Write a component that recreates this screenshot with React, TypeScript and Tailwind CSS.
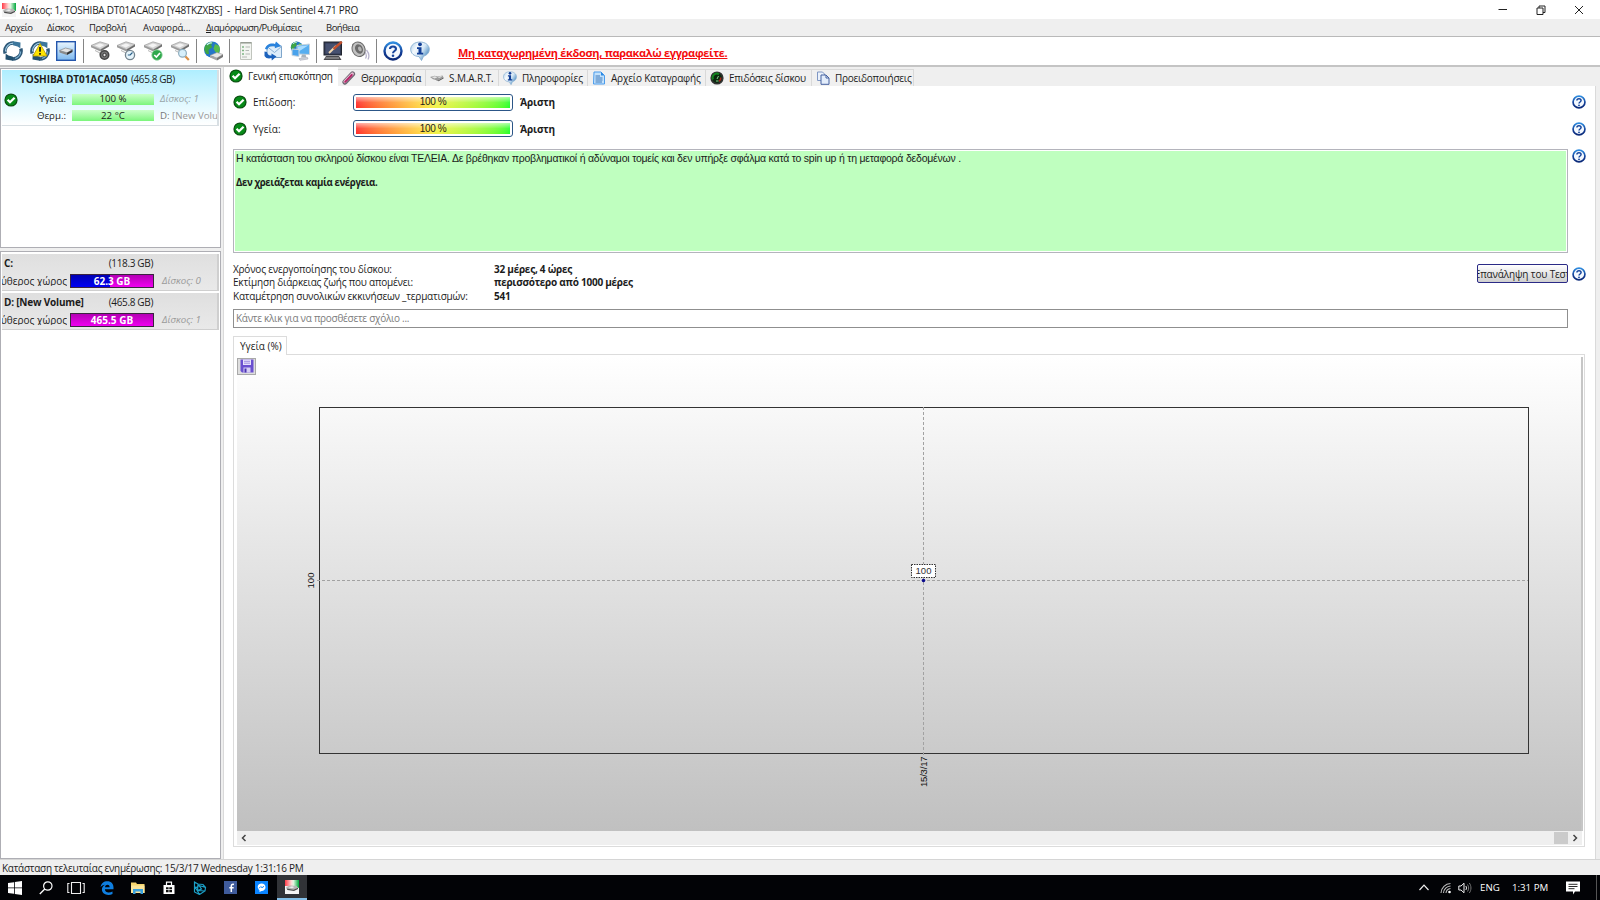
import React from 'react';

interface IconProps {
  size?: number;
}

interface TabItem {
  label: string;
  icon: React.ReactNode;
  width: string;
  tracking: string;
}

const CheckIcon: React.FC<IconProps> = ({ size = 14 }) => (
  <svg width={size} height={size} viewBox="0 0 14 14" className="shrink-0">
    <circle cx="7" cy="7" r="6.6" fill="#0c4a12" />
    <circle cx="7" cy="7" r="5.5" fill="#078a18" />
    <path d="M3.6 6.8 6 9.2 10.600 4.700" fill="none" stroke="#fff" strokeWidth="2.300" />
  </svg>
);

const HelpIcon: React.FC<IconProps> = ({ size = 14 }) => (
  <svg width={size} height={size} viewBox="0 0 20 20" className="shrink-0">
    <defs>
      <linearGradient id="helpRing" x1="0" y1="0" x2="0" y2="1">
        <stop offset="0" stopColor="#2f8de0" />
        <stop offset="0.6" stopColor="#123c94" />
        <stop offset="1" stopColor="#0c2a78" />
      </linearGradient>
    </defs>
    <circle cx="10" cy="10" r="8.500" fill="#f4f9ff" stroke="url(#helpRing)" strokeWidth="2.400" />
    <path d="M7 8C7 4.600 13 4.600 13 8 13 10 10 10 10 12.200" fill="none" stroke="#17459c" strokeWidth="2.100" />
    <circle cx="10" cy="14.700" r="1.300" fill="#17459c" />
  </svg>
);

const InfoIcon: React.FC<IconProps> = ({ size = 20 }) => (
  <svg width={size} height={size} viewBox="0 0 20 20" className="shrink-0">
    <defs>
      <linearGradient id="infoBubble" x1="0" y1="0" x2="1" y2="0.6">
        <stop offset="0" stopColor="#a8cdea" />
        <stop offset="0.35" stopColor="#f4f9fd" />
        <stop offset="0.65" stopColor="#d5e7f5" />
        <stop offset="1" stopColor="#4f8fc4" />
      </linearGradient>
    </defs>
    <path d="M10 1C15.500 1 19.300 4.200 19.300 8.300 19.300 12 16.500 14.500 13.500 15.300L11.500 19.500 9 15.600C4 15.300 .7 12.300 .7 8.300 .7 4.200 4.500 1 10 1Z" fill="url(#infoBubble)" stroke="#86aed0" strokeWidth="0.900" />
    <circle cx="10" cy="3.300" r="1.900" fill="#123f96" />
    <path d="M7 6.200H11.500V11.800H13.200V13.500H7V11.800H8.500V7.900H7Z" fill="#123f96" />
  </svg>
);

const AppIcon: React.FC<IconProps> = ({ size = 14 }) => (
  <svg width={size} height={size} viewBox="0 0 14 14" className="shrink-0">
    <defs>
      <linearGradient id="appBg" x1="0" y1="0" x2="1" y2="0">
        <stop offset="0" stopColor="#ff3b48" />
        <stop offset="0.45" stopColor="#ffd9d6" />
        <stop offset="0.6" stopColor="#e2f6e2" />
        <stop offset="1" stopColor="#00a83c" />
      </linearGradient>
    </defs>
    <rect width="14" height="14" fill="#f4f4f4" />
    <path d="M0 0H14V8L7 6 0 6Z" fill="url(#appBg)" />
    <path d="M1 7 5 5.500 11.500 6 13 7.800 9 10 2 9Z" fill="#b5b5b5" />
    <path d="M1.500 8.500 8.500 9.700 13 7.800V9L9 11 2.500 10Z" fill="#4b4b4b" />
    <path d="M3.500 7.200 7 6.300 9.500 7.100 7 8.300Z" fill="#ececec" />
  </svg>
);

const RefreshIcon: React.FC<{ warn?: boolean }> = ({ warn }) => (
  <svg width="20" height="20" viewBox="0 0 20 20">
    <path d="M10.500 2A8.200 8.200 0 0 0 2.200 12.500" fill="none" stroke="#2d5878" strokeWidth="3.400" />
    <path d="M9.500 18A8.200 8.200 0 0 0 17.800 7.500" fill="none" stroke="#2d5878" strokeWidth="3.400" />
    <path d="M10.500 2.200A7.800 7.800 0 0 0 2.500 10.500" fill="none" stroke="#9fcbe4" strokeWidth="1.200" />
    <path d="M12 17.500A7.800 7.800 0 0 0 17.600 10.500" fill="none" stroke="#7db1d2" strokeWidth="1.200" />
    <path d="M10 .3 17.500 1.500 17.300 7.300 14.500 5.400 10 4.200Z" fill="#3d779c" />
    <path d="M10 19.700 2.500 18.500 2.700 12.700 5.500 14.600 10 15.800Z" fill="#22506f" />
    {warn && (
      <g>
        <path d="M10 2.500 17 15H3Z" fill="#ffe500" stroke="#b79b00" strokeWidth="0.800" strokeLinejoin="round" />
        <path d="M10 6V10.800M10 12V13.700" stroke="#111" strokeWidth="1.700" />
      </g>
    )}
  </svg>
);

const DriveBody = () => (
  <g>
    <path d="M1 4.500 10 .8 19 3.500 10.500 8.600Z" fill="#d3d3d3" stroke="#9c9c9c" strokeWidth="0.700" />
    <path d="M1 4.500V6.300L10.500 10.500V8.600Z" fill="#9a9a9a" />
    <path d="M10.500 8.600 19 3.500V5.500L10.500 10.500Z" fill="#6c6c6c" />
    <path d="M5 4.600 10 2.500 14.500 4 9.800 6.500Z" fill="#f4f4f4" />
    <path d="M5 9.500 11 12.500 9 13" fill="none" stroke="#b5b5b5" strokeWidth="1" />
  </g>
);

const DriveIcon: React.FC<{ badge: 'gear' | 'clock' | 'check' | 'search' }> = ({ badge }) => (
  <svg width="20" height="20" viewBox="0 0 20 20">
    <DriveBody />
    {badge === 'gear' && (
      <g>
        <circle cx="14.500" cy="14" r="4.200" fill="#777" stroke="#444" strokeWidth="1.600" />
        <circle cx="14.500" cy="14" r="1.700" fill="#e4e4e4" stroke="#333" />
      </g>
    )}
    {badge === 'clock' && (
      <g>
        <circle cx="14" cy="14" r="4.600" fill="#e6f4fb" stroke="#73838e" strokeWidth="1.300" />
        <path d="M14 14 16.500 11.500M14 14H11.800" stroke="#2a5f88" strokeWidth="1.100" />
      </g>
    )}
    {badge === 'check' && (
      <g>
        <circle cx="14" cy="14" r="5.200" fill="#2fa84c" stroke="#8fd29d" strokeWidth="0.800" />
        <path d="M11.300 14 13.400 16.100 17 12" fill="none" stroke="#fff" strokeWidth="1.700" />
      </g>
    )}
    {badge === 'search' && (
      <g>
        <path d="M15 15 18.800 19" stroke="#dc9147" strokeWidth="2.200" />
        <circle cx="12.500" cy="12.300" r="3.900" fill="#d8f0fb" stroke="#8faebf" strokeWidth="1.200" />
      </g>
    )}
  </svg>
);

const DriveBoxIcon = () => (
  <svg width="20" height="20" viewBox="0 0 20 20">
    <defs>
      <linearGradient id="driveBox" x1="0" y1="0" x2="0" y2="1">
        <stop offset="0" stopColor="#e9f6ff" />
        <stop offset="1" stopColor="#7db8ee" />
      </linearGradient>
    </defs>
    <rect x="0.700" y="0.700" width="18.600" height="18.600" fill="url(#driveBox)" stroke="#2456ac" strokeWidth="1.400" />
    <path d="M3.500 9.500 9.500 7 16.500 8.700 11 11.800Z" fill="#e4e4e4" stroke="#777" strokeWidth="0.600" />
    <path d="M3.500 9.500V11.500L11 14V11.800Z" fill="#8a8a8a" />
    <path d="M11 11.800 16.500 8.700V11L11 14Z" fill="#333" />
  </svg>
);

const Globe = () => (
  <g>
    <circle cx="9" cy="8.500" r="8" fill="#2477c9" />
    <path d="M2 5C4 1 8 .3 10 1.500L8 4 9.500 6 5.500 9 6 13 3.500 13C1 10 .8 7.500 2 5Z" fill="#3ea545" />
    <path d="M12 3 16 4.800C17.500 7.500 17 11 15 13L12 10.500 10.500 7.500Z" fill="#57bb4c" />
    <path d="M4 4C5.500 2 7.500 1.500 9 2" fill="none" stroke="#c8ecff" strokeWidth="1.200" />
  </g>
);

const GlobeDriveIcon = () => (
  <svg width="20" height="20" viewBox="0 0 20 20">
    <Globe />
    <path d="M7 14.500 14 11.500 20 13.500 14 17Z" fill="#e7e7e7" stroke="#999" strokeWidth="0.600" />
    <path d="M7 14.500V16.500L14 19.500V17Z" fill="#a5a5a5" />
    <path d="M14 17 20 13.500V16L14 19.500Z" fill="#777" />
  </svg>
);

const ReportIcon = () => (
  <svg width="20" height="20" viewBox="0 0 20 20">
    <path d="M4.500 1.500H15.500V18.500H4.500Z" fill="#f3f5f1" stroke="#c0c4bd" />
    <path d="M4.500 1.200H15.500V2.500H4.500Z" fill="#8d9489" />
    <path d="M6 6H8M6 9.500H8M6 13H8" stroke="#7fb584" strokeWidth="1.500" />
    <path d="M9.500 6H14M9.500 9.500H13M9.500 13H14M6 16H11" stroke="#b4b9b4" strokeWidth="1" />
  </svg>
);

const MailSyncIcon = () => (
  <svg width="20" height="20" viewBox="0 0 20 20">
    <path d="M4 5H18.500V16.500H4Z" fill="#dfeefb" stroke="#7fa6cb" />
    <path d="M4 5.500 11.500 11.500 18.500 5.500" fill="none" stroke="#8cb2d6" />
    <path d="M2 8C3 3.500 8 1.500 12 3L13 .5 18 5 11.800 7.300 12 5.500C8 4.300 5 6 4.500 8.500Z" fill="#2a83dd" />
    <path d="M1.500 10.500V15C3 17.500 6 18 8.500 17L8.800 19.500 13.500 15.500 8.500 12.500V14.500C6 15 4.500 13.500 4 11Z" fill="#1c62bd" />
  </svg>
);

const GlobeMonitorsIcon = () => (
  <svg width="20" height="20" viewBox="0 0 20 20">
    <g transform="scale(0.750)">
      <Globe />
    </g>
    <path d="M7 4.500 19.500 3V13.500L7 13Z" fill="#57aef0" stroke="#c8d3dd" />
    <path d="M8 5.500 18.500 4.200 8 11Z" fill="#a8dcff" />
    <path d="M2 8 9 8.500V15.500L2 14.500Z" fill="#49a2ec" stroke="#ccd6df" />
    <path d="M12 13.500H15.500L16.500 16.500H11Z" fill="#a9b3bc" />
    <path d="M9 17.500 17.500 16.500 18 18 10 19.300Z" fill="#d3d9de" stroke="#99a" strokeWidth="0.500" />
  </svg>
);

const MonitorPenIcon = () => (
  <svg width="20" height="20" viewBox="0 0 20 20">
    <rect x="1" y="1" width="17.500" height="13" fill="#333b52" stroke="#20242e" />
    <path d="M2.500 2.500H17V12.500H2.500Z" fill="#465170" />
    <path d="M3 15H16L18.500 19H0.500Z" fill="#4a4a4e" />
    <path d="M2.500 17H16" stroke="#bbb" strokeWidth="0.900" />
    <path d="M6 12 13 5" stroke="#f3d9b0" strokeWidth="2" />
    <path d="M10.500 8 18.800 .8" stroke="#c4502d" strokeWidth="2.400" />
  </svg>
);

const SpeakerIcon = () => (
  <svg width="20" height="20" viewBox="0 0 20 20">
    <path d="M14 10C16 12 17 15 15.500 17.500M16.500 9C19 12 19.500 15.500 18 18.500" fill="none" stroke="#b7b3cc" strokeWidth="1.300" />
    <path d="M2 3 9 .8 15.500 8 14.500 14 9 15.500 2 9Z" fill="#9a9a9a" />
    <ellipse cx="8.500" cy="8" rx="6.300" ry="7.500" transform="rotate(-25 9 8)" fill="#c0c0c0" stroke="#6a6a6a" />
    <ellipse cx="9" cy="8" rx="3.800" ry="5" transform="rotate(-25 9 8)" fill="#6b6b6b" />
    <ellipse cx="9.800" cy="8.300" rx="1.700" ry="2.500" transform="rotate(-25 9 8)" fill="#b4b4b4" />
  </svg>
);

const ThermometerIcon = () => (
  <svg width="14" height="14" viewBox="0 0 14 14" className="shrink-0">
    <path d="M3 11 10.500 3" stroke="#6d6672" strokeWidth="5.200" strokeLinecap="round" />
    <path d="M3 10.500 10.300 3" stroke="#e6bcd0" strokeWidth="3.200" strokeLinecap="round" />
    <path d="M3.200 10.800 9.800 4" stroke="#b32468" strokeWidth="1.900" strokeLinecap="round" />
  </svg>
);

const SmallDriveIcon = () => (
  <svg width="14" height="14" viewBox="0 0 14 14" className="shrink-0">
    <path d="M0 6 4.500 4.700 8 5.500 12.500 4.500 13.500 6.500 8 9.500 3 8.300Z" fill="#9c9c9c" />
    <path d="M1.500 6 5 5.200 7.500 6.200 4.500 7.400Z" fill="#e4e4e4" />
    <path d="M5 8.500 8 9.500 13.500 6.500V7.500L8.500 10.300Z" fill="#555" />
    <path d="M8.500 6.500 11.500 5.500" stroke="#eee" />
  </svg>
);

const LogIcon = () => (
  <svg width="14" height="14" viewBox="0 0 14 14" className="shrink-0">
    <path d="M2 1H9L12.500 4.500V13H1.500Z" fill="#c3e2fc" stroke="#4a9cec" />
    <path d="M9 1V4.500H12.500Z" fill="#2c8ae4" />
    <path d="M3.500 5H8M3.500 7H10.500M3.500 9H10.500M3.500 11H10" stroke="#3a76b8" strokeWidth="1" />
  </svg>
);

const GaugeIcon = () => (
  <svg width="14" height="14" viewBox="0 0 14 14" className="shrink-0">
    <circle cx="7" cy="7" r="6.600" fill="#333" />
    <circle cx="7" cy="7" r="4.900" fill="#0b2a0f" />
    <path d="M3 8.500A4.200 4.200 0 0 1 9 3.200" fill="none" stroke="#12871f" strokeWidth="1.900" />
    <path d="M10.800 6.500A4.200 4.200 0 0 1 9 10.300" fill="none" stroke="#a8231a" strokeWidth="1.500" />
    <path d="M7 8 8.500 5M6 10H8.500" stroke="#8ad08f" strokeWidth="1" />
  </svg>
);

const CopyIcon = () => (
  <svg width="14" height="14" viewBox="0 0 14 14" className="shrink-0">
    <path d="M1.500 1H6.500L8.500 3V9.500H1.500Z" fill="#eaf1fb" stroke="#7f97c4" />
    <path d="M5 4H10L13 7V13.300H5Z" fill="#e3edfb" stroke="#45619f" />
    <path d="M10 4V7H13" fill="none" stroke="#45619f" />
  </svg>
);

const Cell: React.FC<{ children: React.ReactNode }> = ({ children }) => (
  <div className="flex w-[26.6px] shrink-0 justify-center">{children}</div>
);

const Separator = () => (
  <div className="flex h-6 w-[6.8px] shrink-0 justify-center">
    <div className="w-px bg-[#858585]" />
  </div>
);

const menu = [
  { label: 'Αρχείο', width: 'w-[42px]' },
  { label: 'Δίσκος', width: 'w-[42px]' },
  { label: 'Προβολή', width: 'w-[54px]' },
  { label: 'Αναφορά...', width: 'w-[63px]' },
  { label: 'Διαμόρφωση/Ρυθμίσεις', width: 'w-[120px]' },
  { label: 'Βοήθεια', width: 'w-[60px]' },
];

const tabs: TabItem[] = [
  { label: 'Θερμοκρασία', icon: <ThermometerIcon />, width: 'w-[88px]', tracking: 'tracking-[-0.35px]' },
  { label: 'S.M.A.R.T.', icon: <SmallDriveIcon />, width: 'w-[73px]', tracking: 'tracking-[-0.1px]' },
  { label: 'Πληροφορίες', icon: <InfoIcon size={14} />, width: 'w-[89px]', tracking: 'tracking-[-0.2px]' },
  { label: 'Αρχείο Καταγραφής', icon: <LogIcon />, width: 'w-[118px]', tracking: 'tracking-[-0.2px]' },
  { label: 'Επιδόσεις δίσκου', icon: <GaugeIcon />, width: 'w-[106px]', tracking: 'tracking-[-0.33px]' },
  { label: 'Προειδοποιήσεις', icon: <CopyIcon />, width: 'w-[102px]', tracking: 'tracking-[-0.28px]' },
];

const TitleBar = () => (
  <div className="flex h-[19px] items-center bg-white pl-[2px]">
    <AppIcon />
    <span className="mt-px ml-1 text-[10px] tracking-[-0.27px]">Δίσκος: 1, TOSHIBA DT01ACA050 [Y48TKZXBS]&nbsp; -&nbsp; Hard Disk Sentinel 4.71 PRO</span>
    <div className="ml-auto flex items-center gap-[28px] pr-4">
      <svg width="10" height="10" viewBox="0 0 10 10"><path d="M0.500 4.500H9" stroke="#222" /></svg>
      <svg width="10" height="10" viewBox="0 0 10 10"><path d="M1 3H7V9.500H1ZM3 3V1H9V7.500H7" fill="none" stroke="#222" /></svg>
      <svg width="10" height="10" viewBox="0 0 10 10"><path d="M1 1 9 9M9 1 1 9" stroke="#222" /></svg>
    </div>
  </div>
);

const MenuBar = () => (
  <div className="flex h-[18px] items-center border-b border-[#b9b9b9] bg-[#efefef] pl-[5px] text-[9.5px] tracking-[-0.5px]">
    {menu.map((item) => (
      <span key={item.label} className={`shrink-0 ${item.width} ${item.label.endsWith('...') ? 'tracking-[-0.1px]' : ''}`}>
        {item.label.startsWith('Διαμ') ? (
          <><u>Δ</u>{item.label.slice(1)}</>
        ) : item.label}
      </span>
    ))}
  </div>
);

const Toolbar = () => (
  <div className="flex h-[30px] items-center border-b-2 border-[#c4c4c4] bg-white">
    <Cell><RefreshIcon /></Cell>
    <Cell><RefreshIcon warn /></Cell>
    <Cell><DriveBoxIcon /></Cell>
    <Separator />
    <Cell><DriveIcon badge="gear" /></Cell>
    <Cell><DriveIcon badge="clock" /></Cell>
    <Cell><DriveIcon badge="check" /></Cell>
    <Cell><DriveIcon badge="search" /></Cell>
    <Separator />
    <Cell><GlobeDriveIcon /></Cell>
    <Separator />
    <Cell><ReportIcon /></Cell>
    <Cell><MailSyncIcon /></Cell>
    <Cell><GlobeMonitorsIcon /></Cell>
    <Separator />
    <Cell><MonitorPenIcon /></Cell>
    <Cell><SpeakerIcon /></Cell>
    <Separator />
    <Cell><HelpIcon size={20} /></Cell>
    <Cell><InfoIcon /></Cell>
    <span className="mt-[3px] ml-[25px] text-[11px] font-bold tracking-[-0.32px] text-[#f40d0d] underline">
      Μη καταχωρημένη έκδοση, παρακαλώ εγγραφείτε.
    </span>
  </div>
);

const StatusBarCell: React.FC<{ value: string }> = ({ value }) => (
  <div className="flex h-[11px] w-[82px] items-center justify-center bg-linear-to-b from-[#c9ffc9] to-[#7bf57b] text-[9.7px]">
    {value}
  </div>
);

const DiskPanel = () => (
  <div className="h-[180px] border border-[#aeaeb4] bg-white p-px">
    <div className="h-[56px] overflow-hidden border-r-2 border-b border-[#d8dfe3] bg-linear-to-b from-[#aeeeff] to-white pt-px">
      <div className="flex h-4 items-center pl-[18px] text-[10px]">
        <b className="w-[111px] shrink-0 tracking-[-0.06px]">TOSHIBA DT01ACA050</b>
        <span className="tracking-[-0.4px]">(465.8 GB)</span>
      </div>
      <div className="flex items-start pt-[4px]">
        <div className="w-[20px] shrink-0 pt-[2px] pl-[2px]"><CheckIcon /></div>
        <div className="flex flex-col">
          <div className="flex h-[16px] items-center text-[9.7px] whitespace-nowrap">
            <span className="mr-[6px] w-[44px] text-right">Υγεία:</span>
            <StatusBarCell value="100 %" />
            <i className="ml-[6px] text-[#9aa4a8]">Δίσκος: 1</i>
          </div>
          <div className="flex h-[17px] items-center text-[9.7px] whitespace-nowrap">
            <span className="mr-[6px] w-[44px] text-right">Θερμ.:</span>
            <StatusBarCell value="22 °C" />
            <span className="ml-[6px] text-[#9a9a9a]"><span className="text-[#777]">D:</span> [New Volume]</span>
          </div>
        </div>
      </div>
    </div>
  </div>
);

interface VolumeProps {
  name: string;
  total: string;
  free: string;
  disk: string;
  usedPct: number;
}

const Volume: React.FC<VolumeProps> = ({ name, total, free, disk, usedPct }) => (
  <div className="mb-[2px] h-[37px] overflow-hidden border-r-2 border-b border-[#cfcfcf] bg-linear-to-b from-[#dfdfdf] to-[#e9e9e9] text-[10px]">
    <div className="flex h-[17px] items-center justify-between pr-[64px] pl-[2px]">
      <b className="tracking-[-0.2px]">{name}</b>
      <span className="tracking-[-0.35px]">{total}</span>
    </div>
    <div className="flex h-[19px] items-center whitespace-nowrap">
      <div className="mr-[3px] flex w-[65px] shrink-0 justify-end overflow-hidden">Ελεύθερος χώρος</div>
      <div className="relative h-[14px] w-[84px] shrink-0 border border-[#3b2340] bg-linear-to-b from-[#b400b4] to-[#f000f0]">
        <div className="h-full bg-linear-to-b from-[#0000b4] to-[#0000f4]" style={{ width: `${usedPct}%` }} />
        <b className="absolute inset-0 flex items-center justify-center text-white">{free}</b>
      </div>
      <i className="ml-2 text-[9.7px] text-[#999]">{disk}</i>
    </div>
  </div>
);

const Sidebar = () => (
  <div className="flex w-[221px] shrink-0 flex-col gap-[3px] pt-px">
    <DiskPanel />
    <div className="flex-1 border border-[#aeaeb4] bg-white pt-[2px] pr-px pl-px">
      <Volume name="C:" total="(118.3 GB)" free="62.3 GB" disk="Δίσκος: 0" usedPct={47} />
      <Volume name="D: [New Volume]" total="(465.8 GB)" free="465.5 GB" disk="Δίσκος: 1" usedPct={0} />
    </div>
  </div>
);

const Meter: React.FC<{ label: string }> = ({ label }) => (
  <div className="flex h-[26.5px] items-center pr-[9px] text-[10px]">
    <CheckIcon />
    <span className="ml-[6px] w-[100px]">{label}</span>
    <div className="h-[17px] w-[160px] rounded-[3px] border border-[#2c5687] bg-white p-[2px]">
      <div className="h-full bg-linear-to-r from-[#ff2a2a] via-[#f6f04a] to-[#1eff2a]">
        <div className="flex h-full items-center justify-center bg-linear-to-b from-white/60 via-white/10 to-transparent font-['Liberation_Sans',sans-serif] text-[10px] tracking-[-0.4px]">
          100 %
        </div>
      </div>
    </div>
    <b className="ml-[7px] tracking-[-0.15px]">Άριστη</b>
    <div className="ml-auto"><HelpIcon /></div>
  </div>
);

const stats = [
  { label: 'Χρόνος ενεργοποίησης του δίσκου:', value: '32 μέρες, 4 ώρες' },
  { label: 'Εκτίμηση διάρκειας ζωής που απομένει:', value: 'περισσότερο από 1000 μέρες' },
  { label: 'Καταμέτρηση συνολικών εκκινήσεων _τερματισμών:', value: '541' },
];

const HealthChart = () => (
  <svg width="1346" height="474" viewBox="0 0 1346 474" className="block" fontFamily="'Liberation Sans', sans-serif" fontSize="9.5">
    <defs>
      <linearGradient id="plotBg" x1="0" y1="0" x2="0" y2="1">
        <stop offset="0" stopColor="#ffffff" />
        <stop offset="1" stopColor="#c0c0c0" />
      </linearGradient>
    </defs>
    <rect width="1346" height="474" fill="url(#plotBg)" />
    <rect x="1344" y="0" width="2" height="474" fill="#c6c6c6" />
    <rect x="82.500" y="50.500" width="1209" height="346" fill="none" stroke="#333" />
    <path d="M80 223.500H1291M686.500 50V400" stroke="#a2a2a2" strokeDasharray="3 2" />
    <rect x="674.500" y="207.500" width="24" height="13" fill="#fff" stroke="#333" strokeDasharray="1.500 1" />
    <text x="686.500" y="217" textAnchor="middle" fill="#333">100</text>
    <circle cx="686.500" cy="223.500" r="1.800" fill="#0b0b8c" />
    <text transform="translate(76.500 223.500) rotate(-90)" textAnchor="middle" fill="#111">100</text>
    <text transform="translate(689.500 430) rotate(-90)" fill="#111" letterSpacing="-0.200">15/3/17</text>
  </svg>
);

const SaveIcon = () => (
  <svg width="14" height="14" viewBox="0 0 14 14">
    <path d="M0.500 0.500H13.500V13.500H2L0.500 12Z" fill="#6a4fd0" />
    <path d="M3 0.500H11V6H3Z" fill="#e6e0fb" />
    <path d="M4 2.300H10M4 4.200H10" stroke="#8d78dc" strokeWidth="0.800" />
    <path d="M3.500 8.500H10.500V13.500H3.500Z" fill="#d5cdf5" />
    <path d="M4.500 9.500H6.500V13.500H4.500Z" fill="#4a32b0" />
  </svg>
);

const ChartPanel = () => (
  <div className="mt-[8px] w-[1352px]">
    <div className="flex items-end">
      <div className="z-10 -mb-px flex h-[19px] w-[54px] items-center border border-b-0 border-[#dcdcdc] bg-white pl-[6px] text-[10px]">Υγεία (%)</div>
    </div>
    <div className="h-[493px] border border-[#dcdcdc] bg-white pt-[2px] pr-[2px] pl-[3px]">
      <div className="relative h-[474px]">
        <HealthChart />
        <button className="absolute top-px left-0 flex h-[17px] w-[19px] items-center justify-center border border-[#a9a9a9] bg-[#dedede]">
          <SaveIcon />
        </button>
      </div>
      <div className="flex h-[14px] items-center justify-between bg-[#efefef] px-1">
        <svg width="6" height="8" viewBox="0 0 6 8"><path d="M4.500 1 1.500 4 4.500 7" fill="none" stroke="#444" strokeWidth="1.500" /></svg>
        <div className="flex h-full items-center gap-[4px]">
          <div className="h-[12px] w-[14px] bg-[#cbcbcb]" />
          <svg width="6" height="8" viewBox="0 0 6 8"><path d="M1.500 1 4.500 4 1.500 7" fill="none" stroke="#444" strokeWidth="1.500" /></svg>
        </div>
      </div>
    </div>
  </div>
);

const MainPanel = () => (
  <div className="flex min-w-0 flex-1 flex-col border-l border-[#dadada] bg-[#efefef] pr-1">
    <div className="flex h-[19px] items-end text-[10px] whitespace-nowrap">
      <div className="flex h-full w-[114px] shrink-0 items-center bg-white pb-px pl-[5px]">
        <CheckIcon />
        <span className="ml-[5px] tracking-[-0.3px]">Γενική επισκόπηση</span>
      </div>
      {tabs.map((tab) => (
        <div key={tab.label} className={`flex h-[17px] shrink-0 items-center border-t border-r border-[#d9d9d9] bg-[#f0f0f0] pl-1 ${tab.width}`}>
          {tab.icon}
          <span className={`ml-[5px] ${tab.tracking}`}>{tab.label}</span>
        </div>
      ))}
    </div>
    <div className="flex-1 border-r border-[#dadada] bg-white pt-[3px] pl-[9px]">
      <Meter label="Επίδοση:" />
      <Meter label="Υγεία:" />
      <div className="mt-[7px] flex gap-1">
        <div className="h-[104px] w-[1335px] border border-[#b4b4bc] bg-white p-px">
          <div className="h-full bg-[#bfffbf] px-px pt-px font-['Liberation_Sans',sans-serif] text-[10.5px] leading-[12.5px]">
            <p className="tracking-[-0.216px]">Η κατάσταση του σκληρού δίσκου είναι ΤΕΛΕΙΑ. Δε βρέθηκαν προβληματικοί ή αδύναμοι τομείς και δεν υπήρξε σφάλμα κατά το spin up ή τη μεταφορά δεδομένων .</p>
            <p className="mt-[12.5px] font-['Open_Sans',sans-serif] text-[9.7px] font-bold tracking-[-0.4px]">Δεν χρειάζεται καμία ενέργεια.</p>
          </div>
        </div>
        <HelpIcon />
      </div>
      <div className="mt-[10px] flex items-start">
        <div className="text-[10px] leading-[13.3px]">
          {stats.map((row) => (
            <div key={row.label} className="flex">
              <span className="w-[261px] tracking-[-0.21px]">{row.label}</span>
              <b className="tracking-[-0.25px]">{row.value}</b>
            </div>
          ))}
        </div>
        <div className="mt-px mr-[9px] ml-auto flex items-center gap-1">
          <button className="flex h-[19px] w-[91px] items-center justify-center overflow-hidden rounded-[2px] border border-[#2a2a86] bg-linear-to-b from-white to-[#cfcfcf] text-[10px] tracking-[-0.15px] whitespace-nowrap">
            Επανάληψη του Τεστ
          </button>
          <HelpIcon />
        </div>
      </div>
      <div className="mt-[6px] flex h-[19px] w-[1335px] items-center border border-[#8f8f8f] pl-[2px] text-[10px] tracking-[-0.28px] text-[#7c7c7c]">
        Κάντε κλικ για να προσθέσετε σχόλιο ...
      </div>
      <ChartPanel />
    </div>
  </div>
);

const TaskCell: React.FC<{ children: React.ReactNode }> = ({ children }) => (
  <div className="flex w-[30.8px] shrink-0 items-center justify-center pr-px">{children}</div>
);

const Taskbar = () => (
  <div className="flex h-[25px] bg-[#020306] text-white">
    <TaskCell>
      <svg width="14" height="14" viewBox="0 0 14 14"><path d="M0 2 6 1.200V6.500H0ZM6.800 1.100 14 0V6.500H6.800ZM0 7.300H6V12.700L0 12ZM6.800 7.300H14V14L6.800 12.900Z" fill="#fff" /></svg>
    </TaskCell>
    <TaskCell>
      <svg width="14" height="14" viewBox="0 0 14 14"><circle cx="8.800" cy="5" r="4.200" fill="none" stroke="#fff" strokeWidth="1.200" /><path d="M5.800 8 .8 13" stroke="#fff" strokeWidth="1.300" /></svg>
    </TaskCell>
    <TaskCell>
      <svg width="18" height="14" viewBox="0 0 18 14"><path d="M4.500 1.500H13.500V12.500H4.500ZM2.500 2.500H.8V11.500H2.500M15.500 2.500H17.200V11.500H15.500" fill="none" stroke="#eee" strokeWidth="1.100" /></svg>
    </TaskCell>
    <TaskCell>
      <svg width="14" height="14" viewBox="0 0 14 14"><path d="M.6 6.200C1.200 2.300 3.800.3 7.300.3 11.300.3 13.500 3 13.500 6.500V8.300H4.900C5.100 12 9.500 12.200 12.500 10.400V13.100C8 15.200 2 13.600 1.900 8.600 1.900 6.300 3.200 4.700 5.200 3.800 3 4 1.500 5 .6 6.200ZM5 6.200H9.600C9.700 3 5.500 3 5 6.200Z" fill="#0f7fe0" /></svg>
    </TaskCell>
    <TaskCell>
      <svg width="14" height="14" viewBox="0 0 14 14"><path d="M0 1.500H5L6 3H13.500V12H0Z" fill="#f6d56e" /><path d="M0 4.500H13.500V12H0Z" fill="#fbe59a" /><path d="M2 13V8H12V13H9.500V10.500H4.500V13Z" fill="#3aa0dc" /></svg>
    </TaskCell>
    <TaskCell>
      <svg width="14" height="14" viewBox="0 0 14 14"><path d="M1.500 4H12.500V13L1.500 13Z" fill="#fff" /><path d="M4.500 4V1.200H9.500V4" fill="none" stroke="#fff" strokeWidth="1.200" /><path d="M4 6.300H6.600V8.300H4ZM7.300 6.300H10V8.300H7.300ZM4 9H6.600V11.200H4ZM7.300 9H10V11.200H7.300Z" fill="#111" /></svg>
    </TaskCell>
    <TaskCell>
      <svg width="14" height="14" viewBox="0 0 14 14"><path d="M1.500 1 5 3 4.500 9.500 8.500 8 6 4.500 12.500 6.500 12 10 6.500 13.500 1.500 11ZM5 3 10 3.500 12.500 6.500M1.500 5 6.500 13.500M4.500 9.500 12 10M1.500 8 6 4.500" fill="none" stroke="#1b9fc6" strokeWidth="1.200" /></svg>
    </TaskCell>
    <TaskCell>
      <svg width="13" height="13" viewBox="0 0 13 13"><rect width="13" height="13" fill="#3f5b9b" /><path d="M10 3.500C8 3 7.300 3.800 7.300 5.300V11M5.300 6.700H9.700" fill="none" stroke="#fff" strokeWidth="1.500" /></svg>
    </TaskCell>
    <TaskCell>
      <svg width="13" height="13" viewBox="0 0 13 13"><rect width="13" height="13" fill="#0a84ff" /><path d="M6.500 2.500C9 2.500 10.500 4.200 10.500 6.200S9 9.900 6.500 9.900L4.500 11V9.200C1.500 7 2.500 2.500 6.500 2.500Z" fill="#fff" /><path d="M4 7.300 5.800 5.500 7 6.700 9 5.300" fill="none" stroke="#0a84ff" /></svg>
    </TaskCell>
    <div className="flex w-[30px] shrink-0 items-center justify-center border-b-2 border-[#83bfe8] bg-[#313337]"><AppIcon /></div>
    <div className="ml-auto flex items-center text-[9.7px]">
      <svg width="10" height="7" viewBox="0 0 10 7"><path d="M.5 6 5 1.200 9.500 6" fill="none" stroke="#eee" strokeWidth="1.200" /></svg>
      <svg className="ml-[11px]" width="11" height="12" viewBox="0 0 11 12"><path d="M1 11A10 10 0 0 1 10.500 1.500M3.500 11A7.500 7.500 0 0 1 10.500 4M6 11A5 5 0 0 1 10.500 6.500" fill="none" stroke="#bbb" strokeWidth="1.100" /><circle cx="9.500" cy="10" r="1.300" fill="#fff" /></svg>
      <svg className="ml-[7px]" width="14" height="12" viewBox="0 0 14 12"><path d="M.8 4H3L6 1.200V10.800L3 8H.8Z" fill="none" stroke="#eee" /><path d="M7.800 4C8.700 5.300 8.700 6.700 7.800 8" fill="none" stroke="#eee" /><path d="M9.500 2.500C11 4.500 11 7.500 9.500 9.500M11.300 1C13.500 4 13.500 8 11.300 11" fill="none" stroke="#777" /></svg>
      <span className="ml-[8px] w-[32px]">ENG</span>
      <span className="w-[54px]">1:31 PM</span>
      <svg width="14" height="14" viewBox="0 0 14 14"><path d="M0 .5H14V10.500H9L7 13.500V10.500H0Z" fill="#fff" /><path d="M2.500 3.300H11.500M2.500 5.500H11.500M2.500 7.700H8.500" stroke="#111" strokeWidth="0.900" /></svg>
      <div className="mr-[3px] ml-4 h-[25px] w-px bg-[#555]" />
    </div>
  </div>
);

const App: React.FC = () => {
  return (
    <div className="flex h-[900px] w-[1600px] flex-col overflow-hidden bg-[#efefef] font-['Open_Sans',sans-serif] leading-none text-[#1c1c1c]">
      <TitleBar />
      <MenuBar />
      <Toolbar />
      <div className="flex min-h-0 flex-1 gap-[2px]">
        <Sidebar />
        <MainPanel />
      </div>
      <div className="flex h-[16px] shrink-0 items-center border-t border-[#d5d5d5] bg-[#efefef] pt-px pl-[2px] text-[10px] tracking-[-0.28px]">
        Κατάσταση τελευταίας ενημέρωσης: 15/3/17 Wednesday 1:31:16 PM
      </div>
      <Taskbar />
    </div>
  );
};

export default App;
